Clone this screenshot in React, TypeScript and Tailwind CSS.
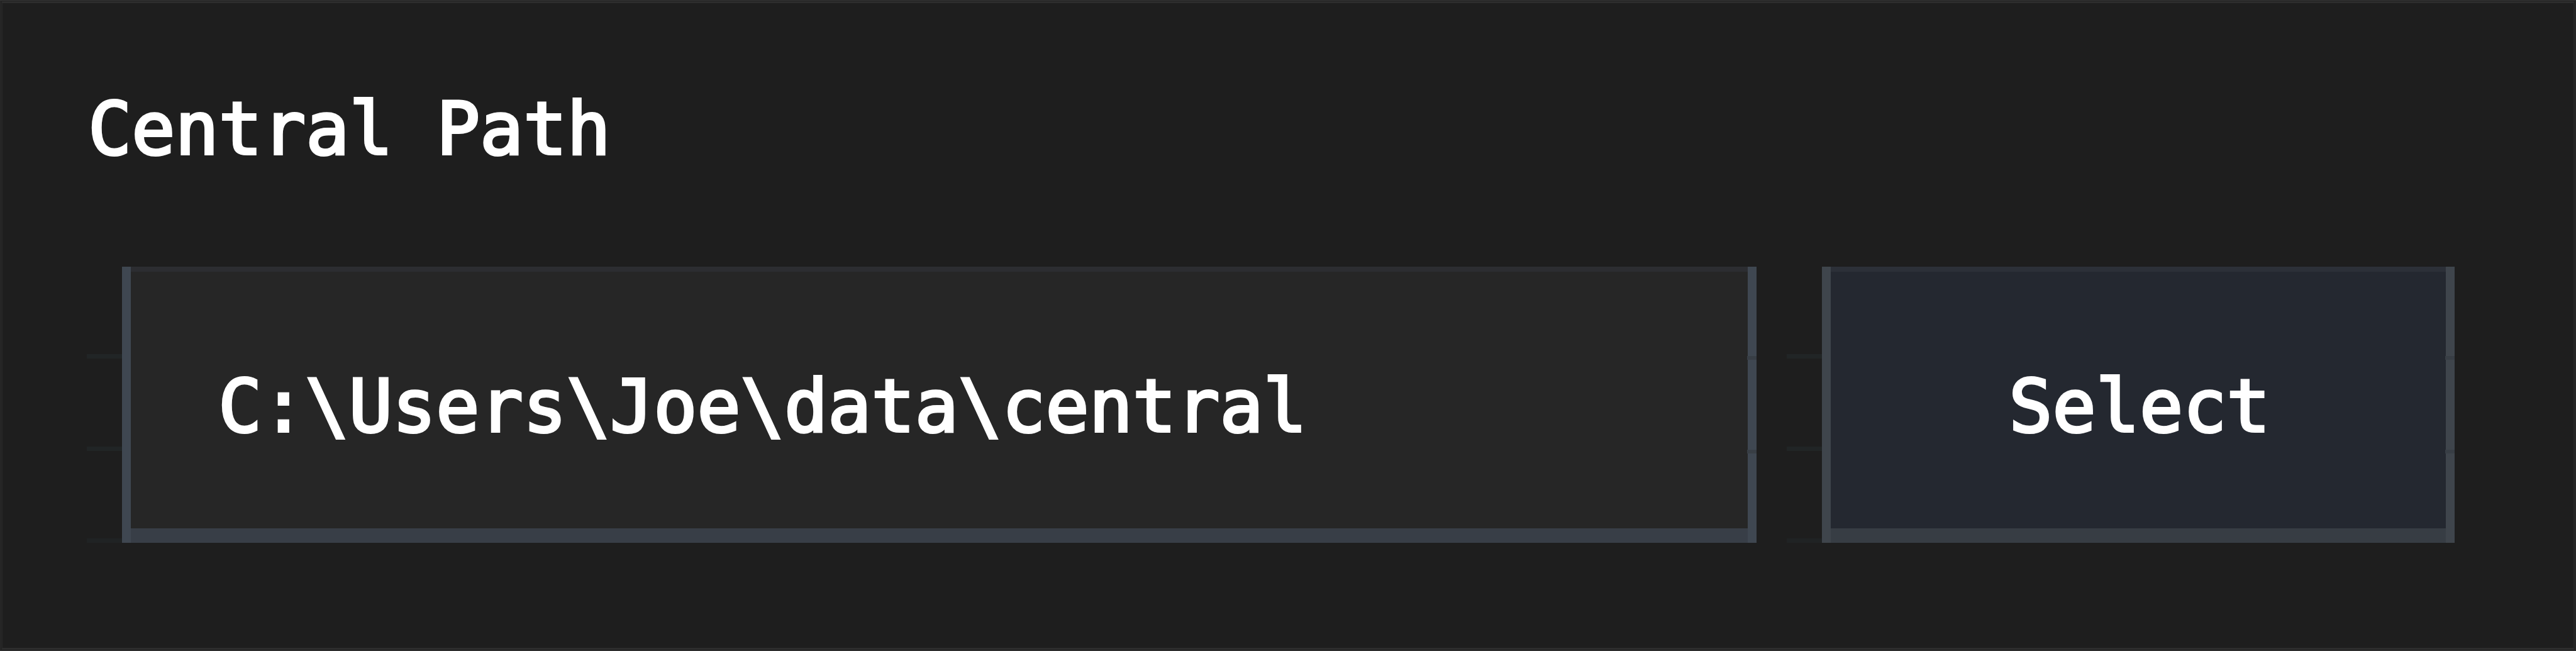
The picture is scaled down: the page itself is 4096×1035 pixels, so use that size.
import { useState } from "react";

function Ticks() {
  return (
    <div aria-hidden="true" className="flex w-14 flex-col">
      <div className="flex-1 border-b-[7px] border-[#212526]" />
      <div className="flex-1 border-b-[7px] border-[#212526]" />
      <div className="flex-1 border-b-[7px] border-[#202324]" />
    </div>
  );
}

function Notches() {
  return (
    <div aria-hidden="true" className="pointer-events-none absolute inset-y-0 right-0 flex w-[15px] flex-col">
      <div className="flex-1 border-b-[6px] border-[#383e45]" />
      <div className="flex-1 border-b-[6px] border-[#383e45]" />
      <div className="flex-1" />
    </div>
  );
}

export default function App() {
  const [path, setPath] = useState("C:\\Users\\Joe\\data\\central");

  return (
    <main className="min-h-screen border border-x-[#2b2b2b] border-y-[#383838] bg-[#1e1e1e] p-px">
      <form
        onSubmit={(e) => e.preventDefault()}
        className="min-h-[calc(100vh-4px)] border-x-2 border-y-[3px] border-x-[#272727] border-y-[#2d2d2d] pt-[132px] pr-[189px] pl-[134px] font-['DejaVu_Sans_Mono',monospace] text-[115px] leading-[136px] text-white [-webkit-text-stroke:4px_white]"
      >
        <label htmlFor="central-path" className="block pl-0.5">
          Central Path
        </label>
        <div className="mt-[151px] flex h-[439px]">
          <Ticks />
          <div className="relative flex flex-1">
            <input
              id="central-path"
              type="text"
              value={path}
              onChange={(e) => setPath(e.target.value)}
              className="w-full min-w-0 border-x-[14px] border-[#3f4751] bg-[#262626] pt-1 pl-[139px] shadow-[inset_0_8px_#2c2d31,inset_0_-23px_#383e47] outline-none"
            />
            <Notches />
          </div>
          <div className="ml-12 flex">
            <Ticks />
            <div className="relative flex w-[1006px]">
              <button
                type="button"
                className="w-full border-x-[14px] border-[#3f454c] bg-[#242830] pt-1 pl-1 shadow-[inset_0_8px_#2c3038,inset_0_-23px_#373d44]"
              >
                Select
              </button>
              <Notches />
            </div>
          </div>
        </div>
      </form>
    </main>
  );
}
